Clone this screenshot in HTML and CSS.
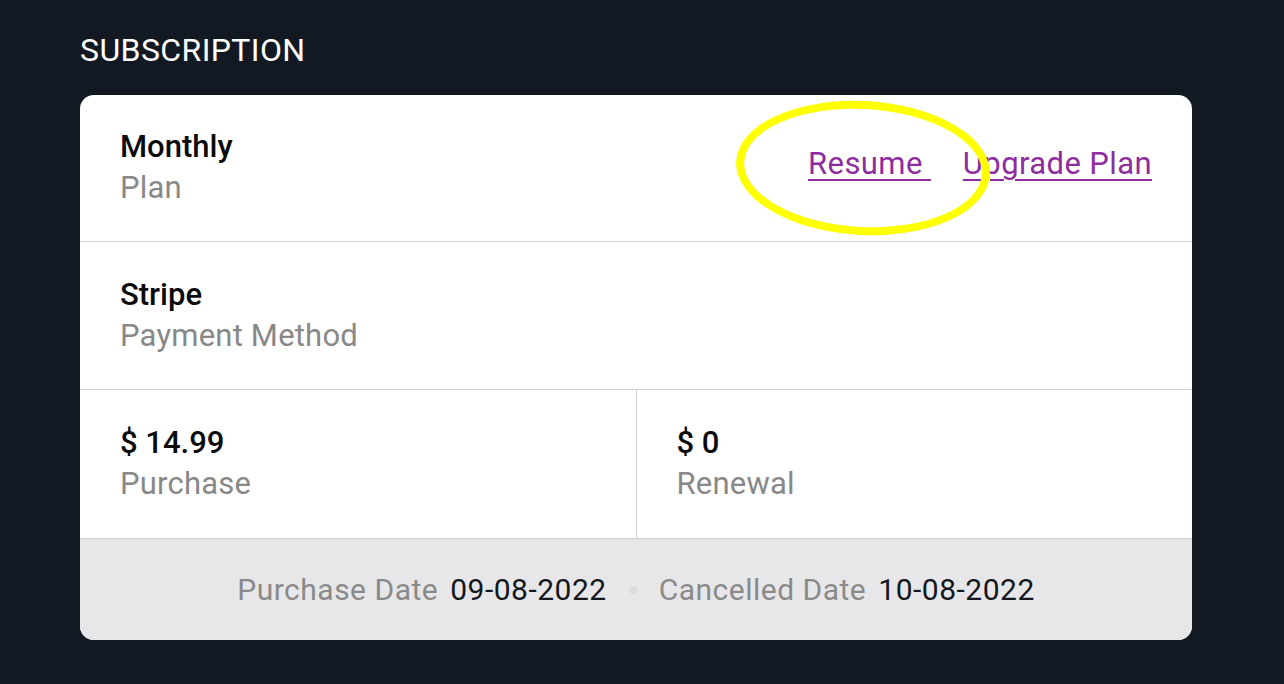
FILE: index.html
```html
<!DOCTYPE html>
<html>
<head>
<meta charset="utf-8">
<link rel="stylesheet" href="styles.css">
</head>
<body>
<div class="page">
  <h2 class="title">SUBSCRIPTION</h2>
  <div class="card">
    <div class="row row-plan">
      <div class="item">
        <div class="value">Monthly</div>
        <div class="label">Plan</div>
      </div>
      <div class="actions">
        <a class="link" href="#">Resume&nbsp;</a>
        <a class="link" href="#">Upgrade Plan</a>
        <span class="highlight"></span>
      </div>
    </div>
    <div class="row row-pay">
      <div class="item">
        <div class="value">Stripe</div>
        <div class="label">Payment Method</div>
      </div>
    </div>
    <div class="row row-split">
      <div class="item cell">
        <div class="value">$ 14.99</div>
        <div class="label">Purchase</div>
      </div>
      <div class="item cell">
        <div class="value">$ 0</div>
        <div class="label">Renewal</div>
      </div>
    </div>
    <div class="footer">
      <span class="flabel">Purchase Date</span>
      <span class="fvalue">09-08-2022</span>
      <span class="dot"></span>
      <span class="flabel">Cancelled Date</span>
      <span class="fvalue">10-08-2022</span>
    </div>
  </div>
</div>
</body>
</html>
```
FILE: styles.css
```css
html, body {
  margin: 0;
  padding: 0;
  background: #121923;
  font-family: Roboto, "Liberation Sans", sans-serif;
}
.page {
  width: 1112px;
  padding: 30px 0 0 80px;
}
.title {
  margin: 0 0 25px 0;
  font-weight: 400;
  font-size: 32px;
  line-height: 40px;
  color: #ffffff;
  letter-spacing: 0.4px;
}
.card {
  background: #ffffff;
  border-radius: 14px;
  overflow: hidden;
}
.row {
  display: flex;
  align-items: center;
  justify-content: space-between;
  height: 147px;
  border-bottom: 1.5px solid #cfcfcf;
  box-sizing: border-box;
}
.row-pay { height: 148px; }
.item {
  padding-left: 40px;
}
.value {
  font-size: 31px;
  font-weight: 500;
  color: #0b0b0b;
  line-height: 40px;
}
.label {
  font-size: 31px;
  color: #888888;
  line-height: 42px;
  letter-spacing: 0.2px;
}
.actions {
  position: relative;
  display: flex;
  gap: 32px;
  padding-right: 40px;
  margin-top: -8px;
}
.link {
  font-size: 31px;
  line-height: 42px;
  color: #8d2d9f;
  letter-spacing: 0.4px;
  text-decoration: underline;
  text-underline-offset: 5px;
  text-decoration-thickness: 2px;
}
.highlight {
  position: absolute;
  left: -72px;
  top: -42px;
  width: 254px;
  height: 134px;
  border: 8px solid #ffff00;
  border-radius: 50%;
  transform: rotate(3deg);
  box-sizing: border-box;
}
.row-split {
  height: 149px;
  align-items: stretch;
}
.cell {
  flex: 1;
  display: flex;
  flex-direction: column;
  justify-content: center;
}
.cell + .cell {
  border-left: 1.5px solid #cfcfcf;
}
.footer {
  background: #e7e7e9;
  height: 101px;
  display: flex;
  align-items: center;
  justify-content: center;
  font-size: 30px;
  letter-spacing: 0.5px;
}
.flabel {
  color: #8a8a8a;
  margin-right: 12px;
}
.fvalue {
  color: #14171c;
}
.dot {
  width: 8px;
  height: 8px;
  border-radius: 50%;
  background: #dcdcde;
  margin: 0 22px;
}
```
